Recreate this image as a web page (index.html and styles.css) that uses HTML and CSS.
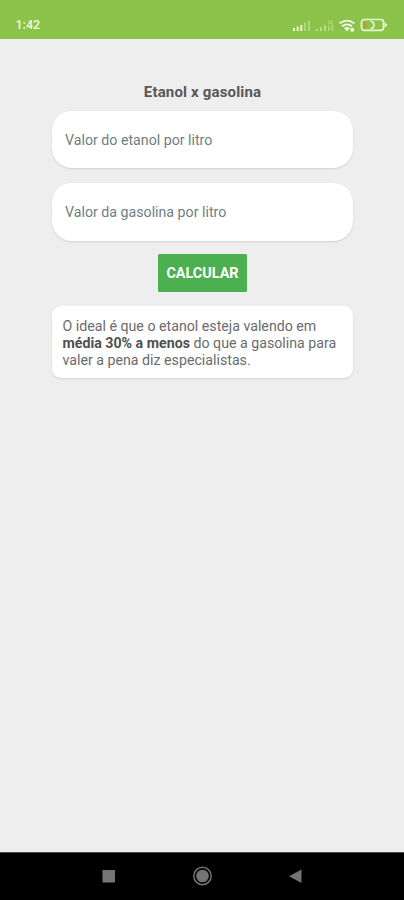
FILE: index.html
```html
<!DOCTYPE html>
<html lang="pt-BR">
<head>
<meta charset="utf-8">
<title>Etanol x gasolina</title>
<link rel="stylesheet" href="styles.css">
</head>
<body>
<header class="status">
  <span class="clock">1:42</span>
  <svg class="status-icons" width="96" height="16" viewBox="0 0 96 16">
    <g fill="#eef8cf">
      <path d="M1 11h2v3H1zM4.700 9.500h2V14h-2zM8.300 8h2v6h-2z"/>
      <path opacity=".4" d="M12 5.500h2V14h-2zM16 3.500h2V14h-2z"/>
      <path opacity=".45" d="M24 12h2v2h-2zM28 10h2v4h-2zM32 8h2v6h-2zM36 9h1.500v5H36zM39.500 8H41v6h-1.500z"/>
    </g>
    <g fill="none" stroke="#d6efb0" opacity=".65"><path d="M36 3.500l5 4M41 3.500l-5 4"/></g>
    <g fill="none" stroke="#f5fbe8" stroke-width="1.700">
      <path d="M47.500 6.400q7.500-5.600 15 0M50 9.300q5-3.800 10 0M52.600 11.800q2.400-1.800 4.800 0"/>
    </g>
    <path fill="#f5fbe8" d="M53.300 12l1.700 2.500 1.700-2.500zM58.500 11h3.500v3.500h-3.500z"/>
    <rect x="69.500" y="2.500" width="22" height="10.800" rx="2.800" fill="none" stroke="#e9f6cf" stroke-width="1.700"/>
    <path d="M92.500 5l3 2.900-3 2.900z" fill="#e9f6cf"/>
    <rect x="71.500" y="4.900" width="3" height="6" rx="1" fill="#c69540"/>
    <path d="M78.500 4q3.500 1 3.500 4t-3.500 4" fill="none" stroke="#e9f6cf" stroke-width="1.600"/>
  </svg>
</header>
<main class="content">
  <h1 class="title">Etanol x gasolina</h1>
  <label class="field"><input class="input" type="text" placeholder="Valor do etanol por litro"></label>
  <label class="field"><input class="input" type="text" placeholder="Valor da gasolina por litro"></label>
  <button class="calc" type="button">CALCULAR</button>
  <p class="note">O ideal é que o etanol esteja valendo em<br><b>média 30% a menos</b> do que a gasolina para<br>valer a pena diz especialistas.</p>
</main>
<nav class="navbar">
  <svg width="14" height="20" viewBox="0 0 14 20"><path d="M.500 4h12.500v12.500H.500z" fill="#747474"/></svg>
  <svg width="20" height="20" viewBox="0 0 20 20"><circle cx="10.500" cy="10" r="8.700" fill="none" stroke="#747474" stroke-width="1.500"/><circle cx="10.500" cy="10" r="6.300" fill="#747474"/></svg>
  <svg width="14" height="20" viewBox="0 0 14 20"><path d="M13.500 3.500v13.500L1 10.200z" fill="#747474"/></svg>
</nav>
</body>
</html>
```
FILE: styles.css
```css
* {
  box-sizing: border-box;
}

body {
  margin: 0;
  height: 900px;
  display: flex;
  flex-direction: column;
  background: #eeeeee;
  font-family: Roboto, "Liberation Sans", sans-serif;
}

.status {
  height: 39px;
  flex: none;
  display: flex;
  justify-content: space-between;
  align-items: flex-start;
  padding: 17px 16px 0 15.5px;
  background: #8bc34a;
}

.clock {
  color: #f3fadf;
  font-size: 12.5px;
  line-height: 16px;
  font-weight: 500;
}

.content {
  flex: 1;
  display: flex;
  flex-direction: column;
  align-items: center;
  padding: 43px 51px 0 52px;
}

.title {
  margin: 0 0 9px;
  font-size: 15px;
  line-height: 20px;
  font-weight: 700;
  letter-spacing: 0.16px;
  color: #585858;
}

.field {
  width: 301px;
  height: 57px;
  margin-bottom: 15px;
  padding: 0 13px;
  display: flex;
  align-items: center;
  background: #ffffff;
  border-radius: 20px;
  box-shadow: 0 1px 2px rgba(0, 0, 0, 0.12);
}

.field + .field {
  height: 58px;
  margin-bottom: 13px;
}

.input {
  width: 100%;
  padding: 0;
  border: 0;
  outline: 0;
  background: transparent;
  font: 400 14.2px/20px Roboto, "Liberation Sans", sans-serif;
}

.input::placeholder {
  color: #6f7f80;
}

.calc {
  width: 89px;
  height: 38px;
  margin: 0 0 14px;
  padding: 1px 0 0;
  border: 0;
  border-radius: 1.5px;
  background: #4caf50;
  color: #ffffff;
  font: 700 14.4px/20px Roboto, "Liberation Sans", sans-serif;
}

.note {
  width: 301px;
  height: 72px;
  margin: 0;
  padding: 12px 10px 0 10.5px;
  background: #ffffff;
  border-radius: 9px;
  box-shadow: 0 1px 2px rgba(0, 0, 0, 0.12);
  color: #6b6b6b;
  font-size: 14.2px;
  line-height: 17px;
  white-space: nowrap;
}

.note b {
  color: #505050;
}

.navbar {
  height: 48px;
  flex: none;
  display: flex;
  justify-content: space-between;
  align-items: center;
  padding: 0 102px 1px;
  background: #000000;
  border-top: 1px solid #4a4a4a;
}
```
